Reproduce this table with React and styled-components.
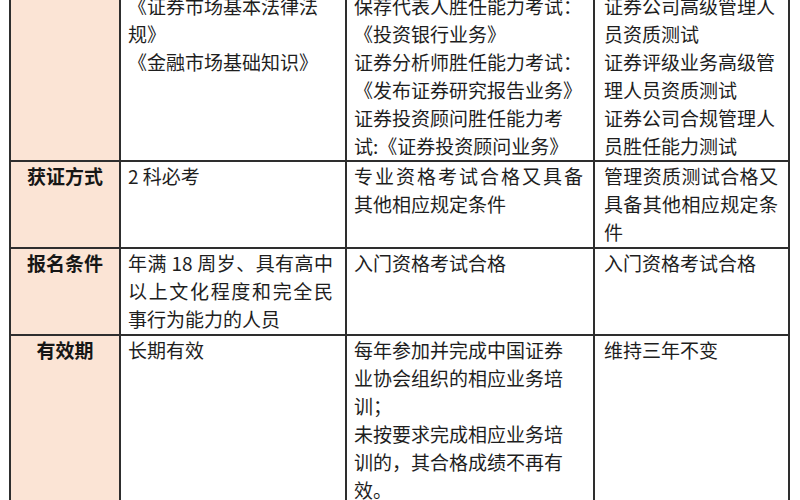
import React from 'react';
import styled, { createGlobalStyle } from 'styled-components';

const GlobalStyle = createGlobalStyle`
  html, body {
    margin: 0;
    padding: 0;
    background: #ffffff;
  }
  body {
    font-family: "Noto Sans CJK SC", "Noto Sans", sans-serif;
  }
`;

const Frame = styled.div`
  width: 800px;
  height: 500px;
  overflow: hidden;
  background: #ffffff;
  padding-left: 9px;
  box-sizing: border-box;
`;

const Table = styled.div`
  display: grid;
  grid-template-columns: 108px 224px 246px 193px;
  gap: 2px;
  width: max-content;
  margin-top: -11px;
  border: 2px solid #2e2e2e;
  background: #2e2e2e;
`;

const HeadCell = styled.div`
  background: #fbe4d5;
  color: #161616;
  font-size: 19px;
  font-weight: 700;
  line-height: 28px;
  text-align: center;
  padding-top: ${(p) => (p.$first ? '1px' : '0')};
  height: ${(p) => p.$height}px;
`;

const Cell = styled.div`
  background: #ffffff;
  color: #1e1e1e;
  font-size: 19px;
  line-height: 28px;
  padding: ${(p) => (p.$first ? '1px' : '0')} ${(p) => p.$right}px 0 ${(p) => p.$left}px;
  height: ${(p) => p.$height}px;
  overflow: hidden;
`;

const Line = styled.div`
  white-space: nowrap;
  text-align: ${(p) => (p.$fill ? 'justify' : 'left')};
  text-align-last: ${(p) => (p.$fill ? 'justify' : 'auto')};
`;

const pads = [
  { left: 7, right: 12 },
  { left: 7, right: 10 },
  { left: 9, right: 10 },
];

const rows = [
  {
    head: '',
    height: 168,
    cols: [
      [['《证券市场基本法律法'], ['规》'], ['《金融市场基础知识》']],
      [
        ['保荐代表人胜任能力考试：'],
        ['《投资银行业务》'],
        ['证券分析师胜任能力考试：'],
        ['《发布证券研究报告业务》'],
        ['证券投资顾问胜任能力考'],
        ['试:《证券投资顾问业务》'],
      ],
      [
        ['证券公司高级管理人'],
        ['员资质测试'],
        ['证券评级业务高级管'],
        ['理人员资质测试'],
        ['证券公司合规管理人'],
        ['员胜任能力测试'],
      ],
    ],
  },
  {
    head: '获证方式',
    height: 85,
    cols: [
      [['2 科必考']],
      [['专业资格考试合格又具备', true], ['其他相应规定条件']],
      [['管理资质测试合格又', true], ['具备其他相应规定条', true], ['件']],
    ],
  },
  {
    head: '报名条件',
    height: 85,
    cols: [
      [['年满 18 周岁、具有高中', true], ['以上文化程度和完全民', true], ['事行为能力的人员']],
      [['入门资格考试合格']],
      [['入门资格考试合格']],
    ],
  },
  {
    head: '有效期',
    height: 180,
    cols: [
      [['长期有效']],
      [
        ['每年参加并完成中国证券'],
        ['业协会组织的相应业务培'],
        ['训；'],
        ['未按要求完成相应业务培'],
        ['训的，其合格成绩不再有'],
        ['效。'],
      ],
      [['维持三年不变']],
    ],
  },
];

function App() {
  return (
    <>
      <GlobalStyle />
      <Frame>
        <Table>
          {rows.map((row, r) => (
            <React.Fragment key={r}>
              <HeadCell $height={row.height} $first={r === 0}>
                {row.head}
              </HeadCell>
              {row.cols.map((lines, c) => (
                <Cell
                  key={c}
                  $height={row.height}
                  $first={r === 0}
                  $left={pads[c].left}
                  $right={pads[c].right}
                >
                  {lines.map(([text, fill], i) => (
                    <Line key={i} $fill={fill}>
                      {text}
                    </Line>
                  ))}
                </Cell>
              ))}
            </React.Fragment>
          ))}
        </Table>
      </Frame>
    </>
  );
}

export default App;
